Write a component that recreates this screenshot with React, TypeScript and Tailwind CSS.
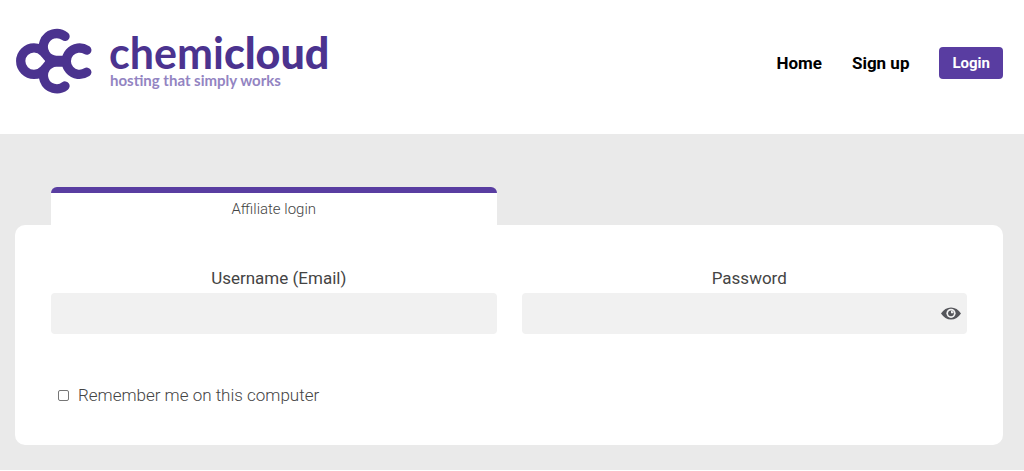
import { useState } from 'react';

function CloudMark() {
    return (
        <svg
            viewBox="15 28 78 66"
            className="w-[78px] h-[66px] shrink-0"
            fill="none"
            stroke="#4b338f"
            strokeWidth="9.3"
            strokeLinecap="round"
            aria-hidden="true"
        >
            <path d="M44 52.5C41.5 49.5 38 47.9 34 47.9A13.3 13.2 0 0 0 34 74.3C38 74.3 41.5 72.7 44 69.7" />
            <path d="M65 36.4A13.4 13.4 0 1 0 56 60.3H64" />
            <path d="M64 62H56A13.4 13.4 0 1 0 65 86" />
            <path d="M86.8 50.2A13.2 13.2 0 1 0 86.8 72.2" />
            <path d="M49.5 61.1H64" />
        </svg>
    );
}

function EyeIcon() {
    return (
        <svg viewBox="0 0 20 13" className="w-5 h-[13px]" aria-hidden="true">
            <path d="M0 6.5C2.5 2.6 6 .4 10 .4s7.5 2.2 10 6.1c-2.5 3.9-6 6.1-10 6.1S2.5 10.4 0 6.5Z" fill="#55565b" />
            <circle cx="10" cy="6.3" r="4.6" fill="#f1f1f1" />
            <circle cx="10" cy="6.3" r="2.9" fill="#55565b" />
            <path d="M10 3.8V6.3H12.5A2.5 2.5 0 0 0 10 3.8Z" fill="#f1f1f1" />
        </svg>
    );
}

function Header() {
    return (
        <header className="flex items-start justify-between pl-[15px] pr-[21px] pt-7 pb-10">
            <a href="#" className="flex items-start gap-4" aria-label="chemicloud, hosting that simply works">
                <CloudMark />
                <span className="flex flex-col pt-1 font-['Lato',sans-serif]">
                    <span className="text-[43px] leading-[42px] font-bold text-[#4b338f]">
                        chemi<span className="font-black">cloud</span>
                    </span>
                    <span className="pl-px text-[15px] leading-3 font-bold text-[#9384c2]">
                        hosting that simply works
                    </span>
                </span>
            </a>
            <nav className="flex items-center gap-[30px] pt-[19px] text-[17px] leading-8 font-bold text-black">
                <a href="#">Home</a>
                <a href="#">Sign up</a>
                <a href="#" className="rounded bg-[#593da1] px-[13px] text-[15px] leading-8 text-white">Login</a>
            </nav>
        </header>
    );
}

export default function App() {
    const [showPassword, setShowPassword] = useState(false);

    return (
        <div className="bg-white font-['Roboto','Open_Sans',sans-serif]">
            <Header />
            <main className="bg-[#eaeaea] pl-[15px] pr-[21px] pt-[53px] pb-[25px]">
                {/* Tab */}
                <div className="grid grid-cols-2 gap-[25px] px-9">
                    <button
                        type="button"
                        className="h-[38px] rounded-t-md border-t-6 border-[#593da1] bg-white text-[15px] font-light text-[#444]"
                    >
                        Affiliate login
                    </button>
                </div>

                {/* Login form */}
                <form className="rounded-[10px] bg-white px-9 pt-10 pb-9 text-[17px] leading-[26px] text-[#444]">
                    <div className="grid grid-cols-2 gap-[25px]">
                        <div className="flex flex-col">
                            <label htmlFor="username" className="pb-0.5 pl-[10px] text-center">Username (Email)</label>
                            <input id="username" type="text" className="h-[41px] w-full rounded bg-[#f1f1f1] px-3 outline-none" />
                        </div>
                        <div className="flex flex-col">
                            <label htmlFor="password" className="pb-0.5 pl-[10px] text-center">Password</label>
                            <div className="flex h-[41px] items-center rounded bg-[#f1f1f1] pr-[6px]">
                                <input
                                    id="password"
                                    type={showPassword ? 'text' : 'password'}
                                    className="h-full min-w-0 flex-1 px-3 outline-none"
                                />
                                <button type="button" title="Show password" onClick={() => setShowPassword(!showPassword)}>
                                    <EyeIcon />
                                </button>
                            </div>
                        </div>
                    </div>
                    <div className="mt-12 flex items-center gap-[9px] pb-px pl-[7px]">
                        <input
                            id="remember"
                            type="checkbox"
                            className="size-[11px] appearance-none rounded-[2px] border border-[#767676] bg-white checked:bg-[#593da1]"
                        />
                        <label htmlFor="remember" className="font-light">Remember me on this computer</label>
                    </div>
                </form>
            </main>
        </div>
    );
}
